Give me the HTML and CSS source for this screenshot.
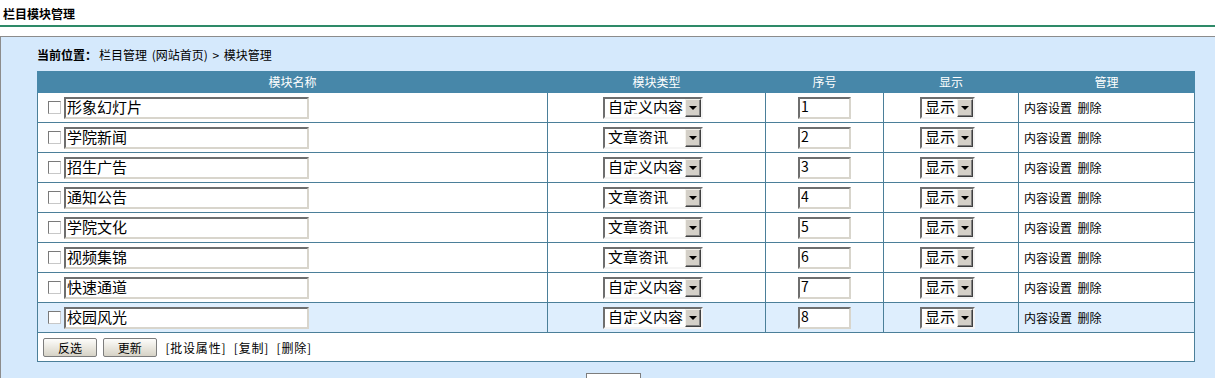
FILE: index.html
```html
<!DOCTYPE html>
<html lang="zh-CN">
<head>
<meta charset="UTF-8">
<title>栏目模块管理</title>
<link rel="stylesheet" href="styles.css">
</head>
<body>
  <div class="page-title">栏目模块管理</div>

  <div class="panel">
    <div class="crumb"><b>当前位置：</b>栏目管理 (网站首页) &gt; 模块管理</div>

    <table class="grid">
      <colgroup>
        <col class="w-name">
        <col class="w-type">
        <col class="w-seq">
        <col class="w-show">
        <col>
      </colgroup>
      <thead>
        <tr>
          <th>模块名称</th>
          <th>模块类型</th>
          <th>序号</th>
          <th>显示</th>
          <th>管理</th>
        </tr>
      </thead>
      <tbody>
        <tr>
          <td class="c-name"><span class="chk"></span><input class="txt name" value="形象幻灯片"></td>
          <td class="c-type"><span class="sel type"><select><option>自定义内容</option><option>文章资讯</option></select></span></td>
          <td class="c-seq"><input class="txt seq" value="1"></td>
          <td class="c-show"><span class="sel show"><select><option>显示</option><option>隐藏</option></select></span></td>
          <td class="c-op">内容设置&nbsp; 删除</td>
        </tr>
        <tr>
          <td class="c-name"><span class="chk"></span><input class="txt name" value="学院新闻"></td>
          <td class="c-type"><span class="sel type"><select><option>文章资讯</option><option>自定义内容</option></select></span></td>
          <td class="c-seq"><input class="txt seq" value="2"></td>
          <td class="c-show"><span class="sel show"><select><option>显示</option><option>隐藏</option></select></span></td>
          <td class="c-op">内容设置&nbsp; 删除</td>
        </tr>
        <tr>
          <td class="c-name"><span class="chk"></span><input class="txt name" value="招生广告"></td>
          <td class="c-type"><span class="sel type"><select><option>自定义内容</option><option>文章资讯</option></select></span></td>
          <td class="c-seq"><input class="txt seq" value="3"></td>
          <td class="c-show"><span class="sel show"><select><option>显示</option><option>隐藏</option></select></span></td>
          <td class="c-op">内容设置&nbsp; 删除</td>
        </tr>
        <tr>
          <td class="c-name"><span class="chk"></span><input class="txt name" value="通知公告"></td>
          <td class="c-type"><span class="sel type"><select><option>文章资讯</option><option>自定义内容</option></select></span></td>
          <td class="c-seq"><input class="txt seq" value="4"></td>
          <td class="c-show"><span class="sel show"><select><option>显示</option><option>隐藏</option></select></span></td>
          <td class="c-op">内容设置&nbsp; 删除</td>
        </tr>
        <tr>
          <td class="c-name"><span class="chk"></span><input class="txt name" value="学院文化"></td>
          <td class="c-type"><span class="sel type"><select><option>文章资讯</option><option>自定义内容</option></select></span></td>
          <td class="c-seq"><input class="txt seq" value="5"></td>
          <td class="c-show"><span class="sel show"><select><option>显示</option><option>隐藏</option></select></span></td>
          <td class="c-op">内容设置&nbsp; 删除</td>
        </tr>
        <tr>
          <td class="c-name"><span class="chk"></span><input class="txt name" value="视频集锦"></td>
          <td class="c-type"><span class="sel type"><select><option>文章资讯</option><option>自定义内容</option></select></span></td>
          <td class="c-seq"><input class="txt seq" value="6"></td>
          <td class="c-show"><span class="sel show"><select><option>显示</option><option>隐藏</option></select></span></td>
          <td class="c-op">内容设置&nbsp; 删除</td>
        </tr>
        <tr>
          <td class="c-name"><span class="chk"></span><input class="txt name" value="快速通道"></td>
          <td class="c-type"><span class="sel type"><select><option>自定义内容</option><option>文章资讯</option></select></span></td>
          <td class="c-seq"><input class="txt seq" value="7"></td>
          <td class="c-show"><span class="sel show"><select><option>显示</option><option>隐藏</option></select></span></td>
          <td class="c-op">内容设置&nbsp; 删除</td>
        </tr>
        <tr class="hover">
          <td class="c-name"><span class="chk"></span><input class="txt name" value="校园风光"></td>
          <td class="c-type"><span class="sel type"><select><option>自定义内容</option><option>文章资讯</option></select></span></td>
          <td class="c-seq"><input class="txt seq" value="8"></td>
          <td class="c-show"><span class="sel show"><select><option>显示</option><option>隐藏</option></select></span></td>
          <td class="c-op">内容设置&nbsp; 删除</td>
        </tr>
        <tr class="actions">
          <td colspan="5">
            <button class="btn">反选</button>
            <button class="btn">更新</button>
            <span class="links">[批设属性] [复制] [删除]</span>
          </td>
        </tr>
      </tbody>
    </table>

    <div class="submit-row"><button class="btn-plain">提交</button></div>
  </div>
</body>
</html>
```

FILE: styles.css
```css
body {
  margin: 0;
  font-family: "Noto Sans CJK SC", "Liberation Sans", sans-serif;
  font-size: 12px;
  color: #000;
  background: #fff;
}

.page-title {
  box-sizing: border-box;
  height: 27px;
  line-height: 28px;
  padding-left: 3px;
  font-weight: bold;
  border-bottom: 2px solid #2e8a68;
}

.panel {
  margin-top: 9px;
  border-top: 1px solid #8c8c8c;
  border-left: 1px solid #8c8c8c;
  background: #d5e9fc;
  padding: 0 20px 40px 36px;
}

.crumb {
  height: 34px;
  line-height: 36px;
  word-spacing: 2px;
}

.crumb b {
  font-weight: bold;
  margin-right: 2px;
}

.grid {
  width: 1158px;
  table-layout: fixed;
  border-collapse: collapse;
  background: #fff;
  border: 1px solid #4b7f99;
}

.w-name { width: 510px; }
.w-type { width: 218px; }
.w-seq { width: 118px; }
.w-show { width: 135px; }

.grid th {
  height: 20px;
  padding: 0;
  background: #4787a9;
  color: #fff;
  font-weight: normal;
  line-height: 20px;
  border: 1px solid #4787a9;
}

.grid td {
  height: 29px;
  padding: 0;
  border: 1px solid #4b7f99;
}

.grid td.c-name { padding-left: 10px; }
.grid td.c-type { text-align: center; padding-right: 7px; }
.grid td.c-seq { text-align: center; }
.grid td.c-show { text-align: center; padding-right: 7px; }
.grid td.c-op { padding-left: 5px; }

.grid tr.hover td {
  background: #deeefd;
}

.chk {
  display: inline-block;
  width: 11px;
  height: 11px;
  border: 1px solid #7a7a7a;
  border-right-color: #c8c8c8;
  border-bottom-color: #c8c8c8;
  background: #fff;
  vertical-align: middle;
  margin-right: 3px;
}

.txt {
  box-sizing: border-box;
  height: 22px;
  padding: 0 1px 3px;
  font-family: "Noto Sans CJK SC", "Liberation Sans", sans-serif;
  font-size: 15px;
  line-height: 16px;
  color: #000;
  background: #fff;
  border: 2px solid;
  border-color: #6e6e6e #d8d5cc #d8d5cc #6e6e6e;
  vertical-align: middle;
  outline: none;
}

.txt.name { width: 245px; }
.txt.seq { width: 53px; font-size: 14px; }

.sel {
  position: relative;
  display: inline-block;
  vertical-align: middle;
}

.sel select {
  -webkit-appearance: none;
  appearance: none;
  box-sizing: border-box;
  display: block;
  height: 22px;
  padding: 0 0 3px 3px;
  font-family: "Noto Sans CJK SC", "Liberation Sans", sans-serif;
  font-size: 15px;
  line-height: 16px;
  color: #000;
  background: #fff;
  border: 2px solid;
  border-color: #6e6e6e #f4f4f4 #f4f4f4 #6e6e6e;
  border-radius: 0;
  outline: none;
}

.sel.type select { width: 100px; }
.sel.show select { width: 55px; }

/* drop-down button drawn over the right end of the select */
.sel::after {
  content: "";
  position: absolute;
  right: 2px;
  top: 2px;
  width: 14px;
  height: 16px;
  background: #d4d0c8;
  border: 1px solid;
  border-color: #f4f2ec #404040 #404040 #f4f2ec;
  box-shadow: inset -1px -1px 0 #808080;
}

.sel::before {
  content: "";
  position: absolute;
  right: 6px;
  top: 9px;
  border-left: 4px solid transparent;
  border-right: 4px solid transparent;
  border-top: 4px solid #000;
  z-index: 1;
}

.grid tr.actions td {
  height: 28px;
  padding-left: 5px;
}

.btn {
  width: 54px;
  height: 19px;
  padding: 0;
  margin-right: 3px;
  font-family: "Noto Sans CJK SC", "Liberation Sans", sans-serif;
  font-size: 12px;
  line-height: 16px;
  color: #000;
  background: linear-gradient(#fdfdfb, #e6e3da 60%, #d6d2c6);
  border: 1px solid #7d7d7d;
  border-radius: 2px;
  vertical-align: middle;
}

.links {
  margin-left: 3px;
  vertical-align: middle;
  letter-spacing: 0.8px;
  word-spacing: 4px;
}

.submit-row {
  padding-top: 11px;
  padding-left: 549px;
}

.btn-plain {
  width: 55px;
  height: 20px;
  padding: 0;
  background: #fff;
  border: 1px solid #7d7d7d;
  font-family: "Noto Sans CJK SC", "Liberation Sans", sans-serif;
  font-size: 12px;
}
```
